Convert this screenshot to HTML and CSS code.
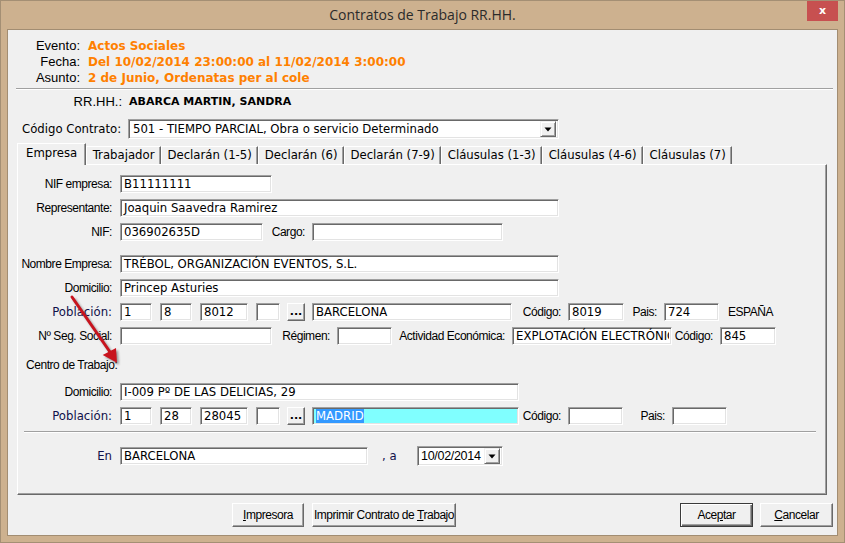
FILE: index.html
```html
<!DOCTYPE html>
<html lang="es">
<head>
<meta charset="utf-8">
<title>Contratos de Trabajo RR.HH.</title>
<link rel="stylesheet" href="styles.css">
</head>
<body>
<div class="window">
  <div class="titlebar">
    <span class="title">Contratos de Trabajo RR.HH.</span>
    <button class="close">x</button>
  </div>
  <div class="client">
    <div class="info">
      <div class="info-row"><span class="info-lbl">Evento:</span><span class="info-val">Actos Sociales</span></div>
      <div class="info-row"><span class="info-lbl">Fecha:</span><span class="info-val">Del 10/02/2014 23:00:00 al 11/02/2014 3:00:00</span></div>
      <div class="info-row"><span class="info-lbl">Asunto:</span><span class="info-val">2 de Junio, Ordenatas per al cole</span></div>
    </div>
    <div class="hsep"></div>
    <div class="rr-row"><span class="rr-lbl">RR.HH.:</span><span class="rr-val">ABARCA MARTIN, SANDRA</span></div>
    <div class="contract-row">
      <span class="contract-lbl tf">Código Contrato:</span>
      <div class="combo contract-combo">
        <span class="combo-text tf">501 - TIEMPO PARCIAL, Obra o servicio Determinado</span>
        <span class="dd"><svg width="8" height="5" viewBox="0 0 8 5"><polygon points="0.5,0.5 7.5,0.5 4,4.5" fill="#000"/></svg></span>
      </div>
    </div>
    <div class="tabs">
      <span class="tab active">Empresa</span>
      <span class="tab">Trabajador</span>
      <span class="tab">Declarán (1-5)</span>
      <span class="tab">Declarán (6)</span>
      <span class="tab">Declarán (7-9)</span>
      <span class="tab">Cláusulas (1-3)</span>
      <span class="tab">Cláusulas (4-6)</span>
      <span class="tab">Cláusulas (7)</span>
    </div>
    <div class="panel">
      <div class="frow first">
        <span class="lbl nf">NIF empresa:</span>
        <div class="fld w152">B11111111</div>
      </div>
      <div class="frow">
        <span class="lbl nf">Representante:</span>
        <div class="fld w439">Joaquin Saavedra Ramirez</div>
      </div>
      <div class="frow">
        <span class="lbl nf">NIF:</span>
        <div class="fld w143">036902635D</div>
        <span class="ilbl nf lw42">Cargo:</span>
        <div class="fld w191"></div>
      </div>
      <div class="frow gap-lg">
        <span class="lbl nf">Nombre Empresa:</span>
        <div class="fld w439">TRÉBOL, ORGANIZACIÓN EVENTOS, S.L.</div>
      </div>
      <div class="frow">
        <span class="lbl nf">Domicilio:</span>
        <div class="fld w439">Princep Asturies</div>
      </div>
      <div class="frow">
        <span class="lbl tf navy">Población:</span>
        <div class="fld w32">1</div>
        <div class="fld w32 ml8">8</div>
        <div class="fld w48 ml8">8012</div>
        <div class="fld w24 ml8"></div>
        <button class="dots ml7">...</button>
        <div class="fld w200 ml7">BARCELONA</div>
        <span class="ilbl nf lw49">Código:</span>
        <div class="fld w56">8019</div>
        <span class="ilbl nf lw33">Pais:</span>
        <div class="fld w55">724</div>
        <span class="nf ml9">ESPAÑA</span>
      </div>
      <div class="frow">
        <span class="lbl nf">Nº Seg. Social:</span>
        <div class="fld w152"></div>
        <span class="ilbl nf lw58">Régimen:</span>
        <div class="fld w55"></div>
        <span class="ilbl nf lw113">Actividad Económica:</span>
        <div class="fld w160"><span class="clip">EXPLOTACIÓN ELECTRÓNICA</span></div>
        <span class="ilbl nf lw41">Código:</span>
        <div class="fld w56">845</div>
      </div>
      <div class="section-lbl nf">Centro de Trabajo:</div>
      <div class="frow after-section">
        <span class="lbl nf">Domicilio:</span>
        <div class="fld w399">I-009 Pº DE LAS DELICIAS, 29</div>
      </div>
      <div class="frow">
        <span class="lbl tf navy">Población:</span>
        <div class="fld w32">1</div>
        <div class="fld w32 ml8">28</div>
        <div class="fld w48 ml8">28045</div>
        <div class="fld w24 ml8"></div>
        <button class="dots ml7">...</button>
        <div class="fld w207 ml7 sel"><span class="hl">MADRID</span></div>
        <span class="ilbl nf lw42">Código:</span>
        <div class="fld w55"></div>
        <span class="ilbl nf lw42">Pais:</span>
        <div class="fld w55"></div>
      </div>
      <div class="psep"></div>
      <div class="frow gap-lg">
        <span class="lbl tf navy">En</span>
        <div class="fld w248">BARCELONA</div>
        <span class="comma tf navy">, a</span>
        <div class="combo date-combo">
          <span class="combo-text nf">10/02/2014</span>
          <span class="dd"><svg width="8" height="5" viewBox="0 0 8 5"><polygon points="0.5,0.5 7.5,0.5 4,4.5" fill="#000"/></svg></span>
        </div>
      </div>
    </div>
    <div class="actions">
      <button class="btn w72 nf"><u>I</u>mpresora</button>
      <button class="btn w144 ml8 nf">Imprimir Contrato de <u>T</u>rabajo</button>
      <button class="btn default w73 push nf">Ace<u>p</u>tar</button>
      <button class="btn w73 ml7 nf"><u>C</u>ancelar</button>
    </div>
  </div>
  <svg class="arrow" width="70" height="90" viewBox="0 0 70 90">
    <defs>
      <filter id="blur" x="-20%" y="-20%" width="140%" height="140%"><feGaussianBlur stdDeviation="1.2"/></filter>
    </defs>
    <g transform="translate(2,2)" opacity="0.45" filter="url(#blur)">
      <line x1="12" y1="12" x2="50" y2="67" stroke="#333" stroke-width="3"/>
      <polygon points="57,77.7 42.7,70 56,63" fill="#333"/>
    </g>
    <line x1="12" y1="12" x2="50" y2="67" stroke="#c8141e" stroke-width="3" stroke-linecap="round"/>
    <polygon points="57,77.7 42.7,70 56,63" fill="#c8141e"/>
  </svg>
</div>
</body>
</html>
```

FILE: styles.css
```css
* { box-sizing: border-box; }
html, body { margin: 0; padding: 0; }
body {
  width: 845px;
  height: 543px;
  overflow: hidden;
  background: #cdb18f;
  font-family: "DejaVu Sans", sans-serif;
  color: #000;
}
.window {
  position: relative;
  width: 845px;
  height: 543px;
  background: #cdb18f;
  box-shadow: inset 0 0 0 1px #a48f74;
  display: flex;
  flex-direction: column;
}
.titlebar {
  height: 30px;
  flex-shrink: 0;
  display: grid;
  grid-template-columns: 1fr auto 1fr;
  align-items: start;
}
.title {
  grid-column: 2;
  font-family: "Open Sans", sans-serif;
  font-size: 14px;
  line-height: 30px;
  color: #2b2b2b;
}
.close {
  grid-column: 3;
  justify-self: end;
  margin: 1px 7px 0 0;
  width: 31px;
  height: 20px;
  padding: 0;
  border: 0;
  background: #c75050;
  color: #fff;
  font: bold 11px "DejaVu Sans", sans-serif;
  line-height: 18px;
}
.client {
  margin: 0 8px 8px;
  height: 505px;
  background: #f0f0f0;
  box-shadow: 0 0 0 1px #a28d72;
  display: flex;
  flex-direction: column;
}

/* fonts */
.nf {
  font-family: "Liberation Sans", "Arial", sans-serif;
  font-size: 12px;
  letter-spacing: -0.45px;
}
.tf {
  font-family: "DejaVu Sans", sans-serif;
  font-size: 11.7px;
}
.navy { color: #10104a; }

/* header info */
.info { padding-top: 8px; }
.info-row {
  display: flex;
  height: 16px;
  line-height: 16px;
  white-space: nowrap;
}
.info-lbl {
  width: 72px;
  text-align: right;
  font-family: "Liberation Sans", sans-serif;
  font-size: 13px;
}
.info-val {
  margin-left: 8px;
  font-weight: bold;
  font-size: 12px;
  color: #ff8000;
}
.hsep {
  margin: 2px 4px 0 8px;
  border-top: 1px solid #a0a0a0;
  border-bottom: 1px solid #fff;
}
.rr-row {
  margin-top: 4px;
  display: flex;
  height: 16px;
  line-height: 16px;
}
.rr-lbl {
  width: 114px;
  text-align: right;
  font-family: "Liberation Sans", sans-serif;
  font-size: 13px;
}
.rr-val {
  margin-left: 7px;
  font-weight: bold;
  font-size: 11px;
}
.contract-row {
  margin-top: 9px;
  display: flex;
  align-items: center;
  height: 20px;
}
.contract-lbl {
  margin-left: 14px;
  width: 106px;
  white-space: nowrap;
}

/* combo box */
.combo {
  display: flex;
  align-items: center;
  height: 20px;
  background: #fff;
  border: 1px solid;
  border-color: #a0a0a0 #fff #fff #a0a0a0;
  box-shadow: inset 1px 1px 0 #696969, inset -1px -1px 0 #e3e3e3;
  padding: 0 2px 0 4px;
}
.contract-combo { width: 431px; }
.combo-text {
  flex: 1;
  white-space: nowrap;
  overflow: hidden;
}
.dd {
  width: 16px;
  height: 16px;
  flex-shrink: 0;
  display: flex;
  align-items: center;
  justify-content: center;
  background: #f0f0f0;
  border: 1px solid;
  border-color: #f0f0f0 #696969 #696969 #f0f0f0;
  box-shadow: inset 1px 1px 0 #fff, inset -1px -1px 0 #a0a0a0;
}
.date-combo {
  width: 86px;
  padding-left: 3px;
}
.date-combo .combo-text { font-size: 12.5px; letter-spacing: -0.3px; }

/* tabs */
.tabs {
  margin-top: 4px;
  margin-left: 9px;
  height: 21px;
  display: flex;
  align-items: flex-end;
}
.tab {
  height: 18px;
  padding: 0 5.5px;
  line-height: 17px;
  font-size: 11.7px;
  white-space: nowrap;
  border-top: 1px solid #fff;
  border-left: 1px solid #fff;
  border-right: 1px solid #696969;
  box-shadow: inset -1px 0 0 #a0a0a0;
  color: #000;
}
.tab.active {
  position: relative;
  z-index: 1;
  height: 22px;
  margin-bottom: -1px;
  padding: 0 8px;
  line-height: 19px;
  background: #f0f0f0;
}

/* panel */
.panel {
  margin-left: 9px;
  width: 810px;
  height: 331px;
  border-top: 1px solid #fff;
  border-left: 1px solid #fff;
  border-right: 1px solid #696969;
  border-bottom: 1px solid #696969;
  box-shadow: inset -1px -1px 0 #a0a0a0;
}
.frow {
  display: flex;
  align-items: center;
  height: 18px;
  margin-top: 6px;
  white-space: nowrap;
}
.frow.first { margin-top: 10px; }
.frow.gap-lg { margin-top: 14px; }
.frow.after-section { margin-top: 10px; }
.lbl {
  width: 94px;
  margin-right: 8px;
  text-align: right;
  flex-shrink: 0;
}
.ilbl {
  margin-right: 7px;
  text-align: right;
  flex-shrink: 0;
}
.section-lbl {
  margin: 12px 0 0 8px;
  height: 16px;
  line-height: 16px;
}
.fld {
  height: 18px;
  flex-shrink: 0;
  background: #fff;
  border: 1px solid;
  border-color: #a0a0a0 #fff #fff #a0a0a0;
  box-shadow: inset 1px 1px 0 #696969, inset -1px -1px 0 #e3e3e3;
  font-family: "DejaVu Sans", sans-serif;
  font-size: 11.7px;
  line-height: 17px;
  padding: 0 2px 0 3px;
  white-space: nowrap;
  overflow: hidden;
}
.clip {
  display: block;
  overflow: hidden;
}
.fld.sel { background: #80ffff; }
.hl { background: #3399ff; color: #fff; }
.dots {
  width: 18px;
  height: 18px;
  padding: 0;
  flex-shrink: 0;
  background: #f0f0f0;
  border: 1px solid;
  border-color: #fff #696969 #696969 #fff;
  box-shadow: inset -1px -1px 0 #a0a0a0;
  font: bold 11px "DejaVu Sans", sans-serif;
  line-height: 12px;
  color: #000;
}
.psep {
  margin: 6px 0 0 6px;
  width: 792px;
  border-top: 1px solid #a0a0a0;
  border-bottom: 1px solid #fff;
}
.comma {
  margin-left: 14px;
  width: 35px;
}

/* widths */
.w24 { width: 24px; }
.w32 { width: 32px; }
.w48 { width: 48px; }
.w55 { width: 55px; }
.w56 { width: 56px; }
.w72 { width: 72px; }
.w73 { width: 73px; }
.w143 { width: 143px; }
.w144 { width: 144px; }
.w152 { width: 152px; }
.w160 { width: 160px; }
.w191 { width: 191px; }
.w200 { width: 200px; }
.w207 { width: 207px; }
.w248 { width: 248px; }
.w399 { width: 399px; }
.w439 { width: 439px; }
.lw33 { width: 33px; }
.lw41 { width: 41px; }
.lw42 { width: 42px; }
.lw49 { width: 49px; }
.lw58 { width: 58px; }
.lw113 { width: 113px; }
.ml7 { margin-left: 7px; }
.ml8 { margin-left: 8px; }
.ml9 { margin-left: 9px; }

/* buttons */
.actions {
  margin-top: 8px;
  display: flex;
  height: 24px;
  padding: 0 4px 0 224px;
}
.btn {
  height: 24px;
  padding: 0;
  white-space: nowrap;
  background: #f0f0f0;
  border: 1px solid;
  border-color: #fff #696969 #696969 #fff;
  box-shadow: inset -1px -1px 0 #a0a0a0;
  color: #000;
}
.btn.default {
  border-color: #3a3a3a;
  box-shadow: inset 1px 1px 0 #fff, inset -1px -1px 0 #696969, inset -2px -2px 0 #a0a0a0;
}
.push { margin-left: auto; }

/* annotation arrow */
.arrow {
  position: absolute;
  left: 60px;
  top: 285px;
  pointer-events: none;
}
```
